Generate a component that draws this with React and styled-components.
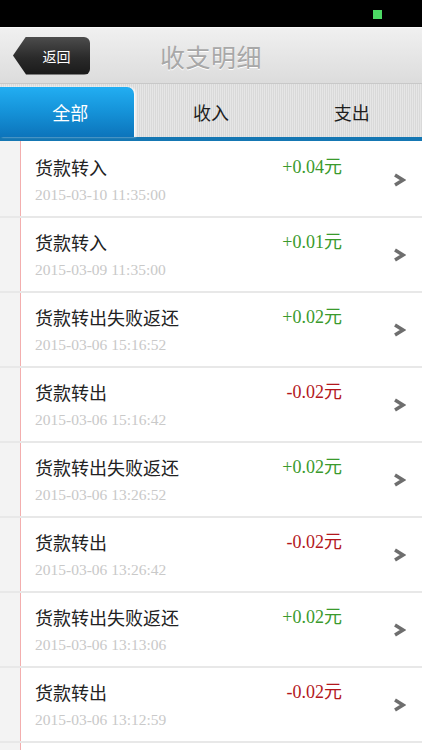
import React from "react";
import styled, { createGlobalStyle } from "styled-components";

const Global = createGlobalStyle`
  html, body { margin: 0; padding: 0; background: #fff; }
  body { overflow: hidden; font-family: "Noto Sans CJK SC", "Noto Sans", sans-serif; }
  * { box-sizing: border-box; }
`;

const Screen = styled.div`
  width: 422px;
  height: 750px;
  overflow: hidden;
  display: flex;
  flex-direction: column;
  background: #fff;
`;

const StatusBar = styled.div`
  height: 27px;
  background: #000;
  display: flex;
  justify-content: flex-end;
  align-items: flex-start;
  padding: 10px 40px 0 0;
`;

const Battery = styled.div`
  width: 9px;
  height: 9px;
  background: #4cd964;
`;

const Header = styled.div`
  height: 57px;
  display: grid;
  grid-template-columns: 1fr auto 1fr;
  align-items: center;
  background: linear-gradient(#f0f0f0, #e4e4e4 60%, #dcdcdc);
  border-top: 1px solid #fafafa;
  border-bottom: 1px solid #c8c8c8;
`;

const BackButton = styled.button`
  justify-self: start;
  margin-left: 13px;
  width: 77px;
  height: 38px;
  padding: 0 0 0 10px;
  border: none;
  border-radius: 0 6px 6px 0;
  clip-path: polygon(13px 0, 100% 0, 100% 100%, 13px 100%, 0 50%);
  background: linear-gradient(#4c4c4c, #2a2a2a 55%, #1a1a1a);
  color: #fff;
  font-family: "Noto Sans CJK SC", sans-serif;
  font-size: 14px;
  line-height: 38px;
`;

const Title = styled.h1`
  margin: 0;
  font-family: "Noto Sans CJK SC", sans-serif;
  font-weight: 400;
  font-size: 25px;
  color: #a8a8a8;
  text-shadow: 0 1px 0 #fff;
  letter-spacing: 0.5px;
`;

const TabBar = styled.div`
  height: 57px;
  display: grid;
  grid-template-columns: 1fr 1fr 1fr;
  align-items: end;
  background: repeating-linear-gradient(to right, #e6e6e6 0 1px, #d9d9d9 1px 2px);
  border-bottom: 4px solid #1577b3;
`;

const Tab = styled.div`
  height: ${(p) => (p.$active ? "50px" : "53px")};
  display: flex;
  align-items: center;
  justify-content: center;
  font-family: "Noto Sans CJK SC", sans-serif;
  font-size: 18px;
  color: ${(p) => (p.$active ? "#fff" : "#1e1e1e")};
  background: ${(p) =>
    p.$active ? "linear-gradient(#22aef2, #1592d8 50%, #0c74bb)" : "transparent"};
  border-top-right-radius: ${(p) => (p.$active ? "7px" : "0")};
  box-shadow: ${(p) => (p.$active ? "2px 0 2px rgba(255,255,255,0.8)" : "none")};
  margin-right: ${(p) => (p.$active ? "7px" : "0")};
  padding: ${(p) => (p.$active ? "0 0 0 7px" : "3px 0 0 0")};
`;

const List = styled.div`
  flex: 1;
  padding-top: 2px;
  background: linear-gradient(to right, #f3f3f3 0 20px, #f3aeae 20px 21px, #fff 21px);
`;

const Row = styled.div`
  height: 75px;
  display: grid;
  grid-template-columns: 1fr auto 80px;
  grid-template-rows: auto auto 1fr;
  padding-left: 35px;
  border-bottom: 2px solid #e8e8e8;
`;

const Name = styled.div`
  grid-area: 1 / 1;
  margin-top: 13px;
  font-family: "Noto Sans CJK SC", sans-serif;
  font-size: 18px;
  line-height: 22px;
  color: #222;
`;

const Amount = styled.div`
  grid-area: 1 / 2;
  margin-top: 13px;
  font-family: "Liberation Serif", "Noto Sans CJK SC", serif;
  font-size: 18px;
  line-height: 22px;
  color: ${(p) => (p.$neg ? "#b3171c" : "#3a9a2c")};
`;

const DateText = styled.div`
  grid-area: 2 / 1;
  margin-top: 7px;
  font-family: "Liberation Serif", serif;
  font-size: 15.5px;
  line-height: 20px;
  color: #c9c9c9;
`;

const Chevron = styled.svg`
  grid-area: 1 / 3 / 4 / 4;
  align-self: center;
  margin: 0 0 0 51px;
  width: 13px;
  height: 14px;
`;

const items = [
  ["货款转入", "2015-03-10 11:35:00", "+0.04元", false],
  ["货款转入", "2015-03-09 11:35:00", "+0.01元", false],
  ["货款转出失败返还", "2015-03-06 15:16:52", "+0.02元", false],
  ["货款转出", "2015-03-06 15:16:42", "-0.02元", true],
  ["货款转出失败返还", "2015-03-06 13:26:52", "+0.02元", false],
  ["货款转出", "2015-03-06 13:26:42", "-0.02元", true],
  ["货款转出失败返还", "2015-03-06 13:13:06", "+0.02元", false],
  ["货款转出", "2015-03-06 13:12:59", "-0.02元", true],
];

export default function App() {
  return (
    <Screen>
      <Global />
      <StatusBar>
        <Battery />
      </StatusBar>
      <Header>
        <BackButton>返回</BackButton>
        <Title>收支明细</Title>
        <div />
      </Header>
      <TabBar>
        <Tab $active>全部</Tab>
        <Tab>收入</Tab>
        <Tab>支出</Tab>
      </TabBar>
      <List>
        {items.map(([name, date, amt, neg], i) => (
          <Row key={i}>
            <Name>{name}</Name>
            <Amount $neg={neg}>{amt}</Amount>
            <DateText>{date}</DateText>
            <Chevron viewBox="0 0 13 14">
              <polyline
                points="2,2 10,7 2,12"
                fill="none"
                stroke="#6e6e6e"
                strokeWidth="3.4"
                strokeLinejoin="miter"
              />
            </Chevron>
          </Row>
        ))}
      </List>
    </Screen>
  );
}
